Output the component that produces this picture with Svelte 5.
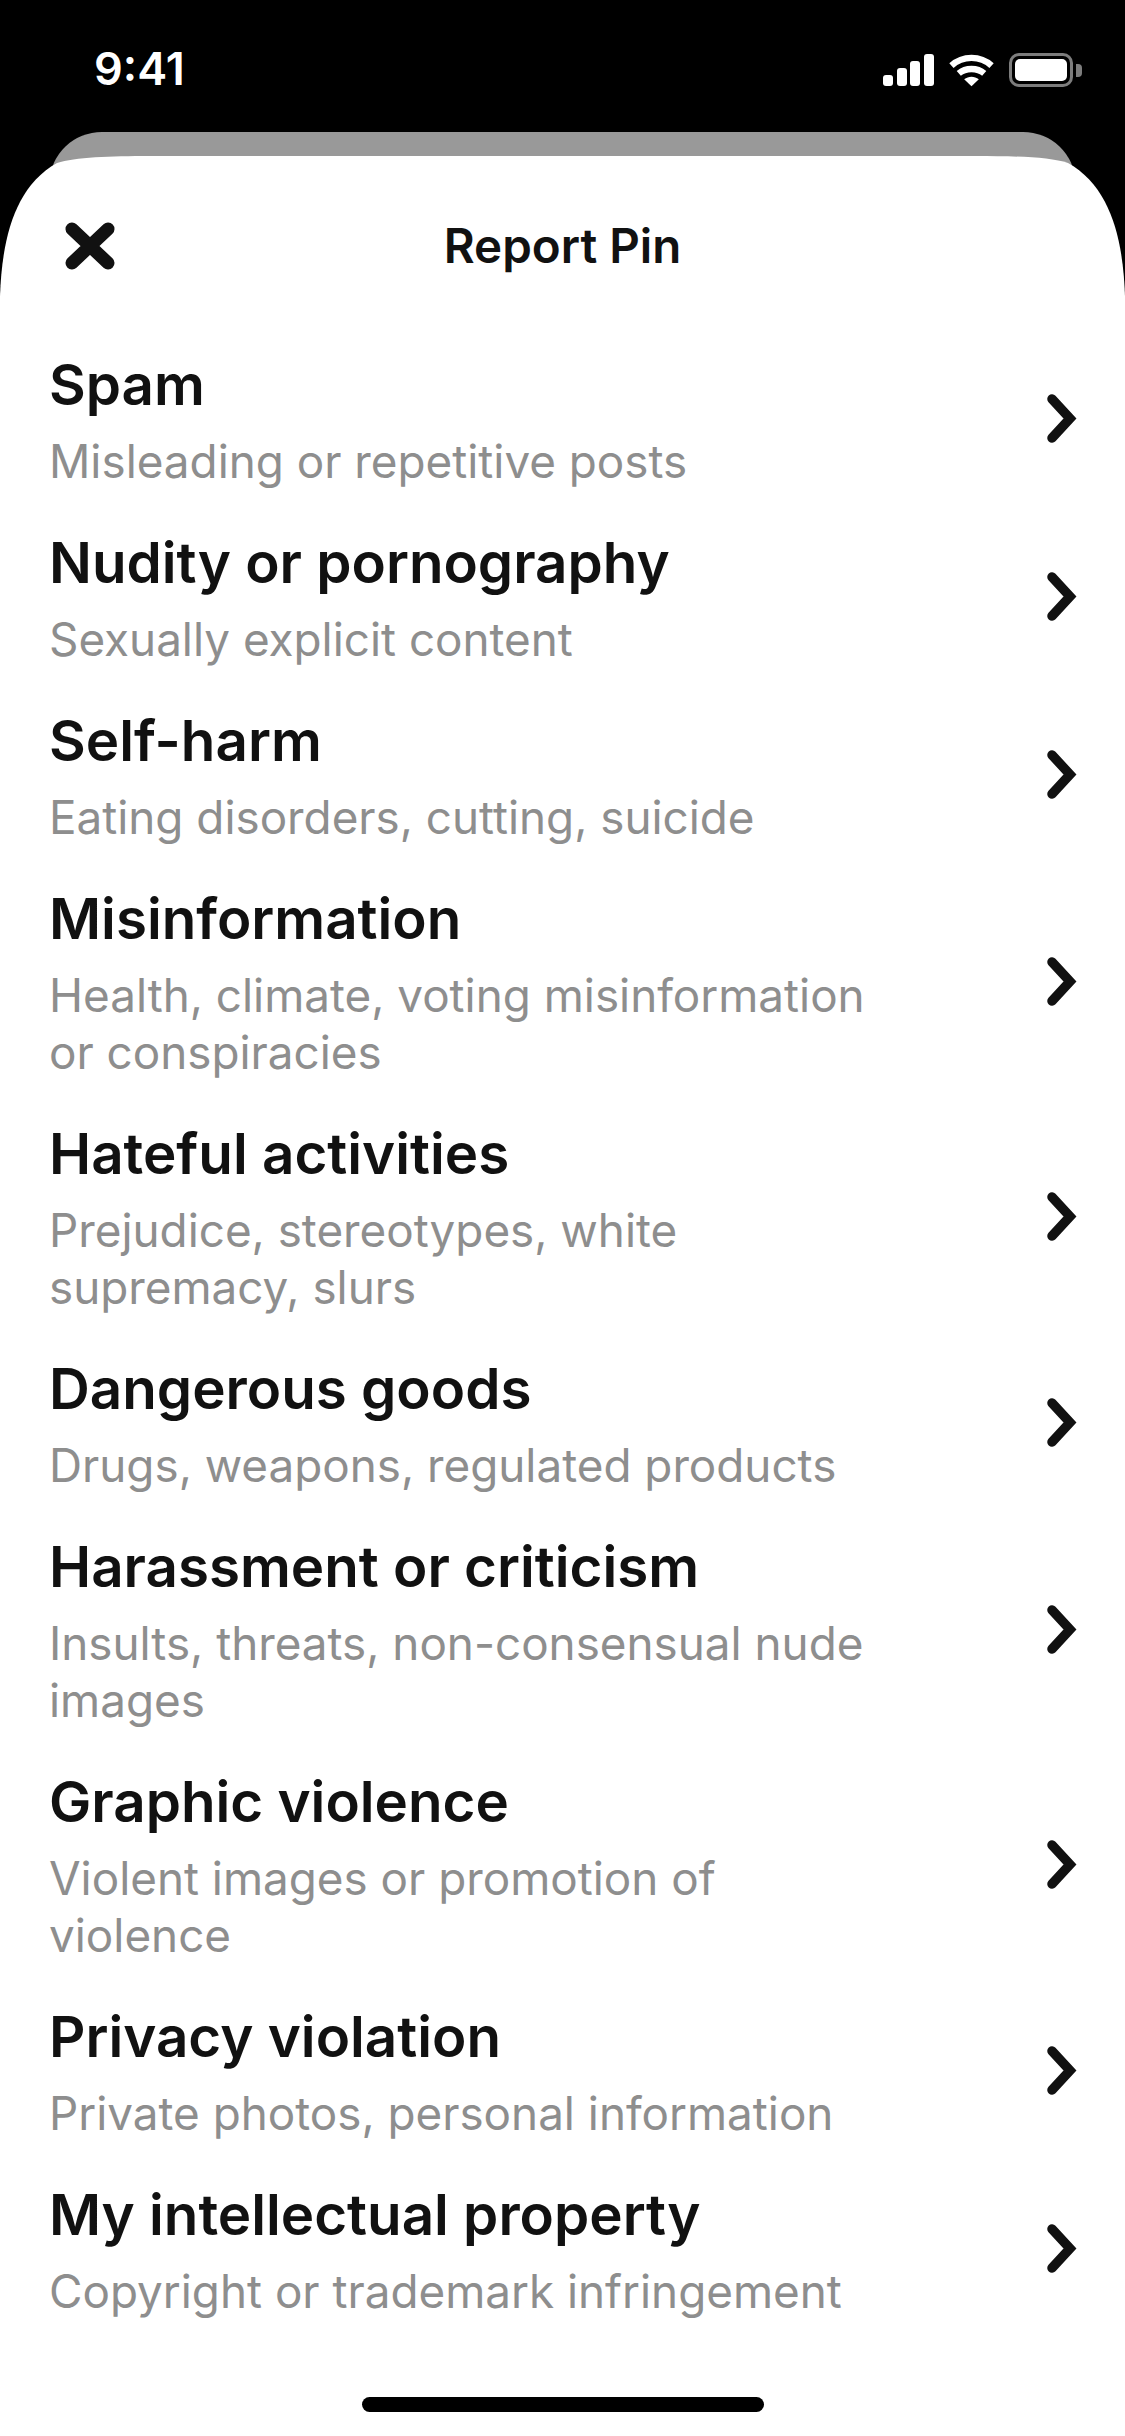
<script lang="ts">
	const rows = [
		{ title: 'Spam', sub: ['Misleading or repetitive posts'] },
		{ title: 'Nudity or pornography', sub: ['Sexually explicit content'] },
		{ title: 'Self-harm', sub: ['Eating disorders, cutting, suicide'] },
		{ title: 'Misinformation', sub: ['Health, climate, voting misinformation', 'or conspiracies'] },
		{ title: 'Hateful activities', sub: ['Prejudice, stereotypes, white', 'supremacy, slurs'] },
		{ title: 'Dangerous goods', sub: ['Drugs, weapons, regulated products'] },
		{ title: 'Harassment or criticism', sub: ['Insults, threats, non-consensual nude', 'images'] },
		{ title: 'Graphic violence', sub: ['Violent images or promotion of', 'violence'] },
		{ title: 'Privacy violation', sub: ['Private photos, personal information'] },
		{ title: 'My intellectual property', sub: ['Copyright or trademark infringement'] }
	];
</script>

<div class="screen">
	<div class="status">
		<span class="time">9:41</span>
		<div class="status-icons">
			<svg width="51" height="32" viewBox="0 0 51 32" fill="#fff">
				<rect x="0" y="21" width="10" height="11" rx="3" />
				<rect x="14" y="14" width="10" height="18" rx="3" />
				<rect x="27" y="7" width="10" height="25" rx="3" />
				<rect x="41" y="0" width="10" height="32" rx="3" />
			</svg>
			<svg width="45" height="33" viewBox="0 0 46 33" fill="none" stroke="#fff" stroke-width="6.5">
				<path d="M2.5 11.5C14 1 32 1 43.5 11.5" />
				<path d="M10 19.5C17 13.5 29 13.5 36 19.5" />
				<path d="M23 32.5L15.5 25.5C20 22 26 22 30.5 25.5Z" fill="#fff" stroke="none" />
			</svg>
			<div class="battery">
				<div class="battery-body"><div class="battery-fill"></div></div>
				<div class="battery-cap"></div>
			</div>
		</div>
	</div>

	<div class="back-card"></div>

	<div class="sheet">
		<header class="sheet-head">
			<button type="button" class="close" aria-label="Close">
				<svg width="50" height="48" viewBox="0 0 50 48" fill="none" stroke="#111" stroke-width="13" stroke-linecap="round">
					<path d="M7 7L43 41M43 7L7 41" />
				</svg>
			</button>
			<h1>Report Pin</h1>
		</header>

		<ul class="list">
			{#each rows as row}
				<li class="row">
					<div class="row-text">
						<div class="row-title">{row.title}</div>
						{#each row.sub as line}
							<div class="row-sub">{line}</div>
						{/each}
					</div>
					<svg class="chevron" width="30" height="49" viewBox="0 0 30 49" fill="none" stroke="#111" stroke-width="9.5" stroke-linecap="round" stroke-linejoin="miter">
						<path d="M5 5L23 24.5L5 44" />
					</svg>
				</li>
			{/each}
		</ul>

		<div class="home-bar"></div>
	</div>
</div>

<style>
	:global(body) {
		margin: 0;
		background: #000;
	}

	.screen {
		width: 1125px;
		height: 2436px;
		overflow: hidden;
		display: flex;
		flex-direction: column;
		background: #000;
		font-family: Inter, 'Liberation Sans', sans-serif;
	}

	.status {
		height: 132px;
		flex: none;
		display: flex;
		justify-content: space-between;
		align-items: flex-start;
		padding: 42px 43px 0 94px;
		box-sizing: border-box;
		color: #fff;
	}

	.time {
		font-size: 45px;
		line-height: 54px;
		font-weight: 600;
	}

	.status-icons {
		display: flex;
		align-items: center;
		gap: 15px;
		padding-top: 11px;
	}

	.battery {
		display: flex;
		align-items: center;
		gap: 3px;
	}

	.battery-body {
		width: 64px;
		height: 34px;
		box-sizing: border-box;
		border: 3px solid #7d7d7d;
		border-radius: 10px;
		padding: 3px;
	}

	.battery-fill {
		width: 100%;
		height: 100%;
		background: #fff;
		border-radius: 5px;
	}

	.battery-cap {
		width: 6px;
		height: 13px;
		background: #7d7d7d;
		border-radius: 0 4px 4px 0;
	}

	.back-card {
		flex: none;
		height: 60px;
		margin: 0 50px -36px;
		background: #999;
		border-radius: 52px 52px 0 0 / 50px 50px 0 0;
	}

	.sheet {
		flex: 1;
		position: relative;
		display: flex;
		flex-direction: column;
		background: #fff;
		/* the corner is a squircle, a plain border-radius comes out too round */
		clip-path: path('M0 140C2 84 14 31 57 7C75 1 110 0 150 0L975 0C1015 0 1050 1 1068 7C1111 31 1123 84 1125 140L1125 2280L0 2280Z');
	}

	.sheet-head {
		height: 173px;
		flex: none;
		position: relative;
		display: flex;
		align-items: center;
		justify-content: center;
		padding-top: 6px;
		box-sizing: border-box;
	}

	.close {
		position: absolute;
		left: 65px;
		top: 66px;
		padding: 0;
		border: 0;
		background: none;
		display: flex;
	}

	h1 {
		margin: 0;
		font-size: 47.5px;
		font-weight: 600;
		color: #111;
		line-height: 56px;
	}

	.list {
		list-style: none;
		margin: 0;
		padding: 0 48px 0 49px;
	}

	.row {
		display: flex;
		align-items: center;
		justify-content: space-between;
		padding: 21px 0 17px;
	}

	.row-title {
		font-size: 56.5px;
		font-weight: 600;
		line-height: 69px;
		margin-bottom: 14px;
		color: #111;
	}

	.row-sub {
		font-size: 45.8px;
		line-height: 57px;
		color: #8e8e8e;
	}

	.chevron {
		flex: none;
		margin-bottom: 3px;
	}

	.home-bar {
		position: absolute;
		left: 362px;
		top: 2241px;
		width: 402px;
		height: 15px;
		background: #000;
		border-radius: 8px;
	}
</style>
